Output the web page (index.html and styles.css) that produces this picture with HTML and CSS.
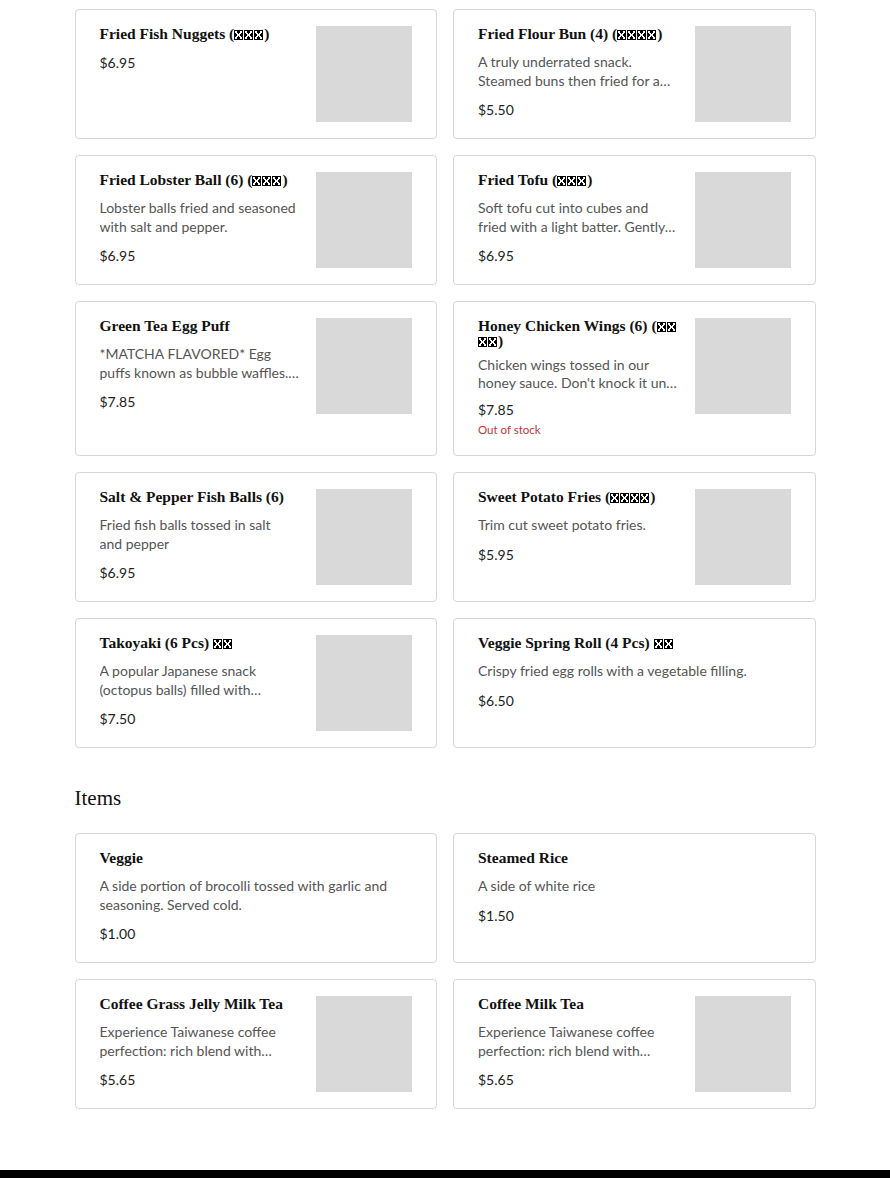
FILE: index.html
```html
<!DOCTYPE html>
<html lang="en">
<head>
<meta charset="utf-8">
<title>Menu</title>
<link rel="stylesheet" href="styles.css">
</head>
<body>
<main class="page">
  <section class="grid">
    <article class="card">
      <div class="card-body">
        <h3 class="card-title">Fried Fish Nuggets (<span class="tofu"></span><span class="tofu"></span><span class="tofu"></span>)</h3>
        <p class="card-price">$6.95</p>
      </div>
      <div class="card-thumb"></div>
    </article>
    <article class="card">
      <div class="card-body">
        <h3 class="card-title">Fried Flour Bun (4) (<span class="tofu"></span><span class="tofu"></span><span class="tofu"></span><span class="tofu"></span>)</h3>
        <p class="card-desc">A truly underrated snack. Steamed buns then fried for a…</p>
        <p class="card-price">$5.50</p>
      </div>
      <div class="card-thumb"></div>
    </article>
    <article class="card">
      <div class="card-body">
        <h3 class="card-title">Fried Lobster Ball (6) (<span class="tofu"></span><span class="tofu"></span><span class="tofu"></span>)</h3>
        <p class="card-desc">Lobster balls fried and seasoned with salt and pepper.</p>
        <p class="card-price">$6.95</p>
      </div>
      <div class="card-thumb"></div>
    </article>
    <article class="card">
      <div class="card-body">
        <h3 class="card-title">Fried Tofu (<span class="tofu"></span><span class="tofu"></span><span class="tofu"></span>)</h3>
        <p class="card-desc">Soft tofu cut into cubes and fried with a light batter. Gently…</p>
        <p class="card-price">$6.95</p>
      </div>
      <div class="card-thumb"></div>
    </article>
    <article class="card">
      <div class="card-body">
        <h3 class="card-title">Green Tea Egg Puff</h3>
        <p class="card-desc">*MATCHA FLAVORED* Egg puffs known as bubble waffles.…</p>
        <p class="card-price">$7.85</p>
      </div>
      <div class="card-thumb"></div>
    </article>
    <article class="card card--soldout">
      <div class="card-body">
        <h3 class="card-title">Honey Chicken Wings (6) (<span class="tofu"></span><span class="tofu"></span><span class="tofu"></span><span class="tofu"></span>)</h3>
        <p class="card-desc">Chicken wings tossed in our honey sauce. Don't knock it un…</p>
        <p class="card-price">$7.85</p>
        <p class="card-stock">Out of stock</p>
      </div>
      <div class="card-thumb"></div>
    </article>
    <article class="card">
      <div class="card-body">
        <h3 class="card-title">Salt &amp; Pepper Fish Balls (6)</h3>
        <p class="card-desc">Fried fish balls tossed in salt and&nbsp;pepper</p>
        <p class="card-price">$6.95</p>
      </div>
      <div class="card-thumb"></div>
    </article>
    <article class="card">
      <div class="card-body">
        <h3 class="card-title">Sweet Potato Fries (<span class="tofu"></span><span class="tofu"></span><span class="tofu"></span><span class="tofu"></span>)</h3>
        <p class="card-desc">Trim cut sweet potato fries.</p>
        <p class="card-price">$5.95</p>
      </div>
      <div class="card-thumb"></div>
    </article>
    <article class="card">
      <div class="card-body">
        <h3 class="card-title">Takoyaki (6 Pcs) <span class="tofu"></span><span class="tofu"></span></h3>
        <p class="card-desc">A popular Japanese snack (octopus balls) filled with…</p>
        <p class="card-price">$7.50</p>
      </div>
      <div class="card-thumb"></div>
    </article>
    <article class="card">
      <div class="card-body">
        <h3 class="card-title">Veggie Spring Roll (4 Pcs) <span class="tofu"></span><span class="tofu"></span></h3>
        <p class="card-desc">Crispy fried egg rolls with a vegetable filling.</p>
        <p class="card-price">$6.50</p>
      </div>
    </article>
  </section>

  <h2 class="section-title">Items</h2>

  <section class="grid">
    <article class="card">
      <div class="card-body">
        <h3 class="card-title">Veggie</h3>
        <p class="card-desc">A side portion of brocolli tossed with garlic and seasoning. Served cold.</p>
        <p class="card-price">$1.00</p>
      </div>
    </article>
    <article class="card">
      <div class="card-body">
        <h3 class="card-title">Steamed Rice</h3>
        <p class="card-desc">A side of white rice</p>
        <p class="card-price">$1.50</p>
      </div>
    </article>
    <article class="card">
      <div class="card-body">
        <h3 class="card-title">Coffee Grass Jelly Milk Tea</h3>
        <p class="card-desc">Experience Taiwanese coffee perfection: rich blend with…</p>
        <p class="card-price">$5.65</p>
      </div>
      <div class="card-thumb"></div>
    </article>
    <article class="card">
      <div class="card-body">
        <h3 class="card-title">Coffee Milk Tea</h3>
        <p class="card-desc">Experience Taiwanese coffee perfection: rich blend with…</p>
        <p class="card-price">$5.65</p>
      </div>
      <div class="card-thumb"></div>
    </article>
  </section>
</main>
<footer class="footer"></footer>
</body>
</html>
```

FILE: styles.css
```css
* {
  box-sizing: border-box;
}

html, body {
  margin: 0;
  padding: 0;
  background: #fff;
}

body {
  font-family: Lato, "Noto Sans", sans-serif;
  color: #222;
}

.page {
  width: 741px;
  margin: 0 auto;
  padding: 9px 0 61px;
}

.grid {
  display: grid;
  grid-template-columns: 1fr 1fr;
  gap: 16px;
}

.section-title {
  margin: 38px 0 23px;
  font: 400 21px/24px "Liberation Serif", serif;
  color: #111;
}

.card {
  display: flex;
  gap: 16px;
  min-height: 130px;
  padding: 16px 24px;
  border: 1px solid #d6d6d6;
  border-radius: 4px;
  background: #fff;
}

.card-body {
  flex: 1;
  min-width: 0;
}

.card-title {
  margin: 0 0 12px;
  font: 700 15.5px/15px "Liberation Serif", serif;
  color: #111;
}

.card-desc {
  margin: 0 0 10px;
  font-size: 14px;
  line-height: 18.5px;
  color: #555;
  display: -webkit-box;
  -webkit-line-clamp: 2;
  -webkit-box-orient: vertical;
  overflow: hidden;
}

.card-price {
  margin: 0;
  font-size: 14px;
  line-height: 20px;
  color: #222;
}

.card-stock {
  margin: 0;
  font-size: 11.5px;
  line-height: 19px;
  color: #b53a3a;
}

.card--soldout .card-title,
.card--soldout .card-desc {
  margin-bottom: 7.5px;
}

.card-thumb {
  flex: none;
  width: 96px;
  height: 96px;
  background: #d9d9d9;
}

.tofu {
  display: inline-block;
  width: 9px;
  height: 10px;
  margin-right: 1px;
  padding: 1px;
  vertical-align: -1px;
  background-color: #000;
  background-image:
    linear-gradient(to top right, transparent 42%, #fff 42%, #fff 58%, transparent 58%),
    linear-gradient(to bottom right, transparent 42%, #fff 42%, #fff 58%, transparent 58%);
  background-origin: content-box;
  background-repeat: no-repeat;
}

.footer {
  height: 8px;
  background: #000;
}
```
